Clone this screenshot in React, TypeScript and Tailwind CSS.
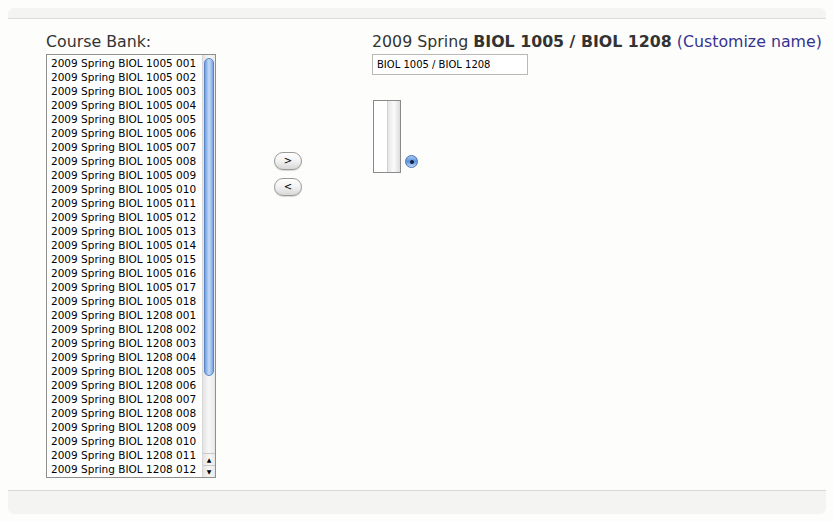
const courses = [
  ...Array.from({ length: 18 }, (_, i) => `2009 Spring BIOL 1005 ${String(i + 1).padStart(3, '0')}`),
  ...Array.from({ length: 12 }, (_, i) => `2009 Spring BIOL 1208 ${String(i + 1).padStart(3, '0')}`),
];

const font = { fontFamily: '"DejaVu Sans", Verdana, sans-serif' };

const PillButton = ({ label }: { label: string }) => (
  <button className="w-[28px] h-[18px] rounded-full border border-[#9a9a9a] bg-gradient-to-b from-white via-[#f1f1f1] to-[#d8d8d8] text-[10px] leading-none text-black flex items-center justify-center shadow-[0_1px_1px_rgba(0,0,0,0.15)]">
    {label}
  </button>
);

const App = () => {
  return (
    <div className="w-[834px] h-[522px] bg-[#fdfdfb] pt-2 px-2 text-[#333] overflow-hidden" style={font}>
      {/* top band */}
      <div className="h-[11px] rounded-t-md bg-[#f4f5f2] border-b border-[#dcdcdc]" />

      <div className="h-[471px] flex pt-[13px]">
        {/* course bank */}
        <div className="ml-[38px] w-[170px] shrink-0 flex flex-col">
          <div className="text-[15.8px] leading-[20px] h-[22px]">Course Bank:</div>
          <div className="h-[424px] border border-[#8f8f8f] bg-white flex">
            <ul className="flex-1 pt-[1px] pl-[4px] text-black text-[10.5px] leading-[14px] overflow-hidden whitespace-nowrap">
              {courses.map((c) => (
                <li key={c} className="h-[14px]">{c}</li>
              ))}
            </ul>
            {/* scrollbar */}
            <div className="w-[13px] flex flex-col bg-gradient-to-r from-[#e4e4e4] via-[#f7f7f7] to-[#e9e9e9] border-l border-[#d6d6d6]">
              <div className="flex-1 pt-[3px] px-[1px]">
                <div className="h-[318px] rounded-full border border-[#5b86c6] bg-gradient-to-r from-[#6f9ee0] via-[#c6dcf7] to-[#7aa6e2]" />
              </div>
              <div className="h-[12px] flex items-center justify-center text-[6px] text-black border-t border-[#c8c8c8]">▲</div>
              <div className="h-[12px] flex items-center justify-center text-[6px] text-black border-t border-[#c8c8c8]">▼</div>
            </div>
          </div>
        </div>

        {/* move buttons */}
        <div className="ml-[58px] shrink-0 pt-[120px] flex flex-col gap-[8px]">
          <PillButton label=">" />
          <PillButton label="<" />
        </div>

        {/* selected section */}
        <div className="ml-[70px] shrink-0 flex flex-col">
          <div className="text-[15.8px] leading-[20px] h-[22px] whitespace-nowrap">
            2009 Spring <b>BIOL 1005 / BIOL 1208</b>{' '}
            <a className="text-[#353390] cursor-pointer">(Customize name)</a>
          </div>
          <input
            className="w-[156px] h-[21px] border border-[#b9b9b9] bg-white px-[4px] text-[10px] text-black outline-none"
            defaultValue="BIOL 1005 / BIOL 1208"
          />
          <div className="mt-[25px] ml-[1px] flex items-end gap-[4px]">
            <div className="w-[28px] h-[73px] border border-[#8a8a8a] bg-white flex justify-end">
              <div className="w-[13px] bg-gradient-to-r from-[#e6e6e6] via-[#fbfbfb] to-[#dcdcdc] border-l border-[#d0d0d0]" />
            </div>
            <div className="mb-[5px] w-[13px] h-[13px] rounded-full border border-[#4a73b3] bg-gradient-to-b from-[#a9c9f2] via-[#5b90dc] to-[#c6dcf7] flex items-center justify-center">
              <div className="w-[4px] h-[4px] rounded-full bg-[#10223d]" />
            </div>
          </div>
        </div>
      </div>

      {/* bottom band */}
      <div className="h-[24px] rounded-b-md bg-[#f4f5f2] border-t border-[#d6d6d6]" />
    </div>
  );
};

export default App;
